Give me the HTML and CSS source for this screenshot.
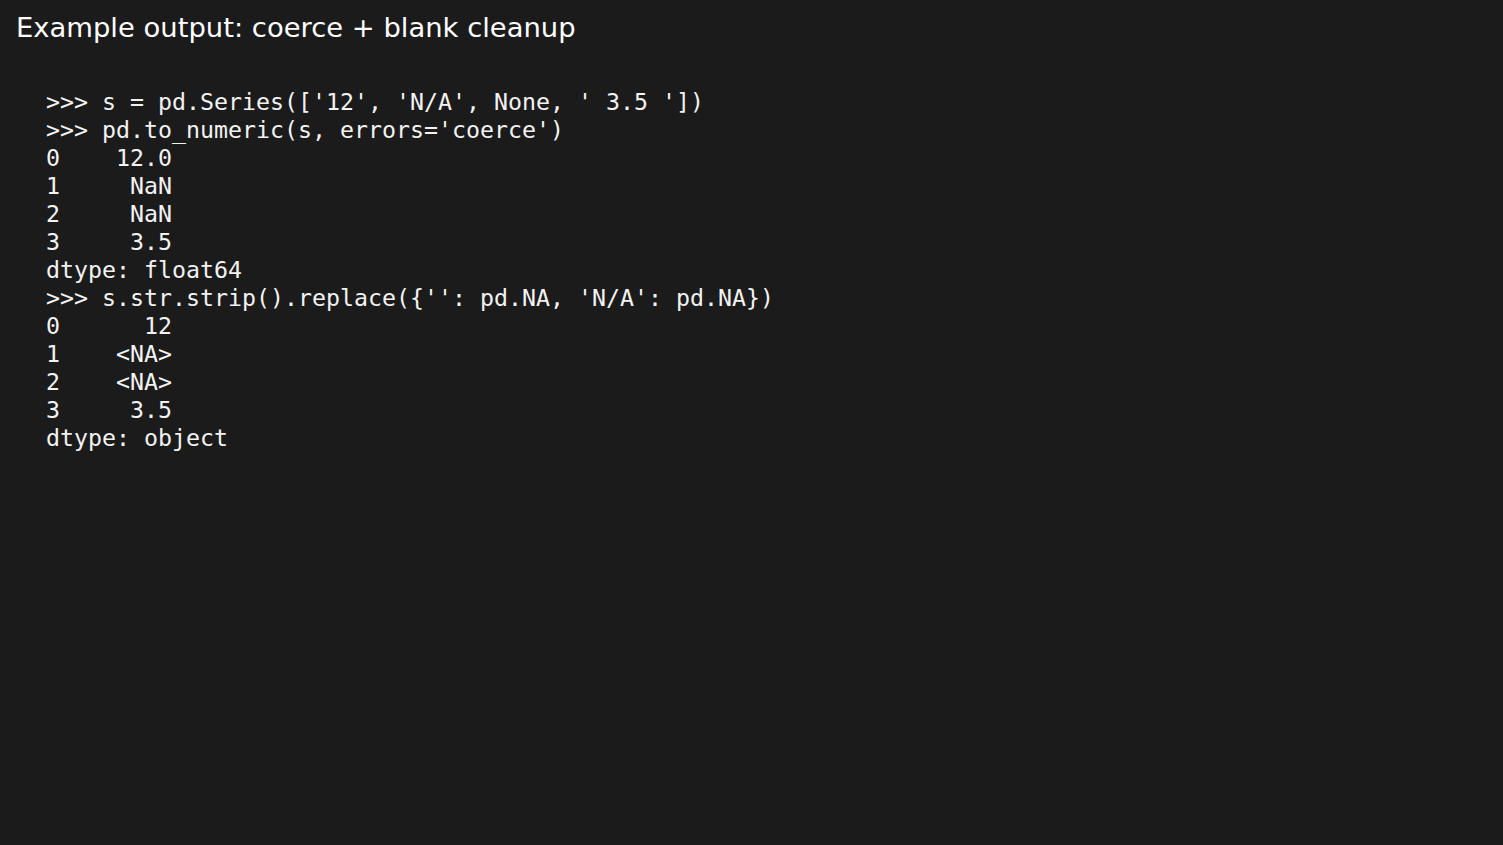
FILE: index.html
```html
<!DOCTYPE html>
<html>
<head>
<meta charset="utf-8">
<link rel="stylesheet" href="styles.css">
</head>
<body>
<main class="page">
<h1 class="title">Example output: coerce + blank cleanup</h1>
<pre class="code">&gt;&gt;&gt; s = pd.Series(['12', 'N/A', None, ' 3.5 '])
&gt;&gt;&gt; pd.to_numeric(s, errors='coerce')
0    12.0
1     NaN
2     NaN
3     3.5
dtype: float64
&gt;&gt;&gt; s.str.strip().replace({'': pd.NA, 'N/A': pd.NA})
0      12
1    &lt;NA&gt;
2    &lt;NA&gt;
3     3.5
dtype: object</pre>
</main>
</body>
</html>
```
FILE: styles.css
```css
html, body {
  margin: 0;
  background: #1b1b1b;
  color: #ffffff;
}
.page {
  padding: 10px 16px;
}
.title {
  margin: 0;
  font-family: "DejaVu Sans", sans-serif;
  font-weight: normal;
  font-size: 27.4px;
  line-height: 36px;
}
.code {
  margin: 42px 0 0 30px;
  font-family: "DejaVu Sans Mono", monospace;
  font-size: 23.25px;
  line-height: 28px;
  color: #f2f2f2;
}
```
